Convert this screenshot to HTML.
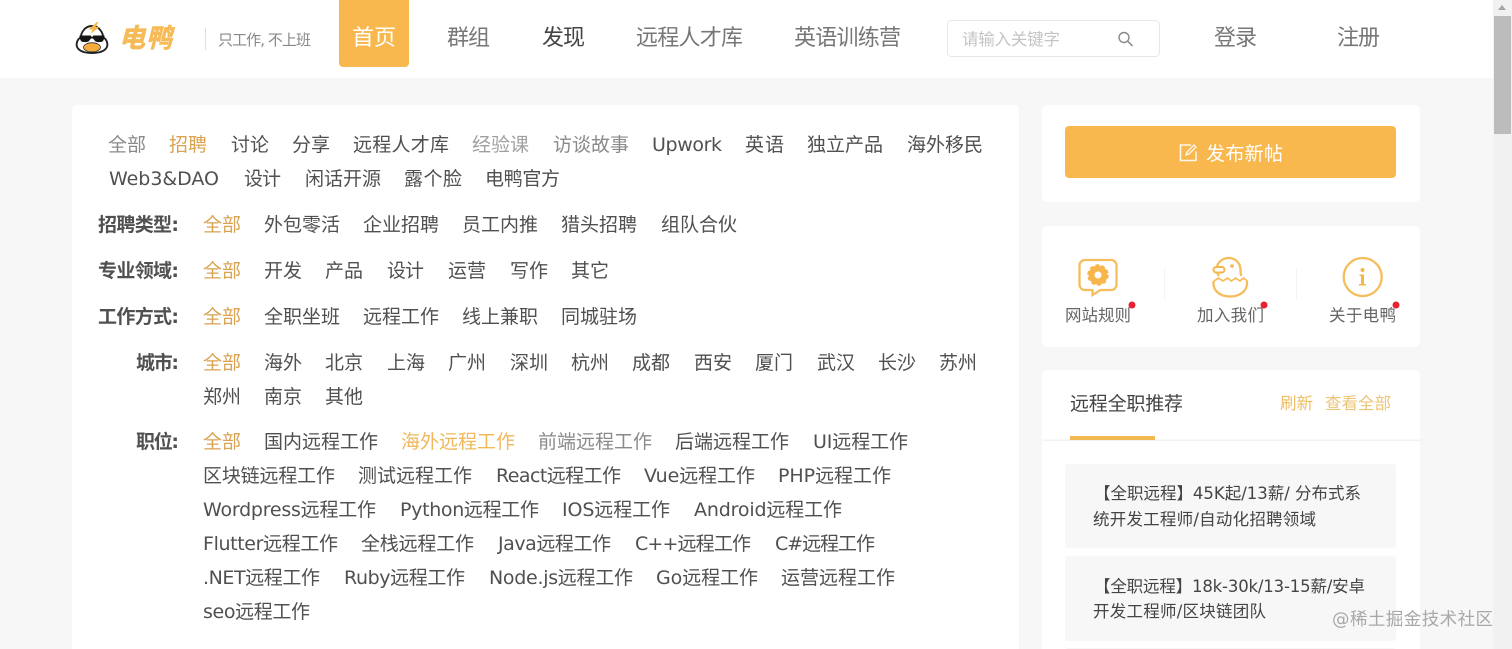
<!DOCTYPE html>
<html lang="zh"><head><meta charset="utf-8"><title>电鸭</title>
<style>
html,body{margin:0;padding:0;width:1512px;height:649px;overflow:hidden;background:#f7f7f7}
svg{position:absolute;left:0;top:0;display:block;filter:blur(.35px)}
text{font-family:"DejaVu Sans","Noto Sans CJK SC",sans-serif;font-size:19px;fill:#505050}
.n{font-size:22px;fill:#777}
.o{fill:#d9a351}.b{font-weight:700;fill:#505050}.g{fill:#8a8a8a}.l{fill:#a0a0a0}
.s{font-size:16.5px}
</style></head><body>
<svg width="1512" height="649" viewBox="0 0 1512 649" xmlns="http://www.w3.org/2000/svg">
<rect width="1512" height="78" fill="#fff"/>
<rect x="72" y="105" width="947" height="560" rx="5" fill="#fff"/>
<rect x="1042" y="105" width="378" height="97" rx="5" fill="#fff"/>
<rect x="1042" y="226" width="378" height="121" rx="5" fill="#fff"/>
<rect x="1042" y="370" width="378" height="290" rx="5" fill="#fff"/>
<rect x="1493" y="0" width="19" height="649" fill="#f1f1f1"/>
<path d="M1498 10l4-5 4 5z" fill="#a3a3a3"/>
<rect x="1494" y="16" width="17" height="118" fill="#bcbcbc"/>

<!-- logo -->
<path d="M92 26C85 26 81.500 32 80.500 37.500C76.500 40 75.500 45.500 78 48.500C81 52 86 53 92 53C98 53 103 52 106 48.500C108.500 45.500 107.500 40 103.500 37.500C102.500 32 99 26 92 26z" fill="#fff" stroke="#222" stroke-width="1.900"/>
<path d="M97 22L88.500 29.500H92.500L90.500 34L99.500 27H95.500L98.500 22z" fill="#f6b64a"/>
<path d="M79.500 35.500h11l1.500 1.500 1.500-1.500h11v2.500l-1.500 3c-1 1.500-7 1.500-8 0l-2-2.500h-2l-2 2.500c-1 1.500-7 1.500-8 0l-1.500-3z" fill="#151515"/>
<ellipse cx="92" cy="47.300" rx="8.500" ry="4.600" fill="#f6ab3e" stroke="#333" stroke-width=".8"/>
<text x="119" y="47" textLength="53" style="font-size:26px;font-weight:700;font-style:italic;fill:#f6bb58;stroke:#f6bb58;stroke-width:.7px">电鸭</text>
<rect x="205" y="28" width="1" height="22" fill="#ddd"/>
<text x="218" y="45" textLength="93" style="font-size:15px;fill:#888">只工作, 不上班</text>

<!-- nav -->
<path d="M339 0h70v63a4 4 0 0 1-4 4h-62a4 4 0 0 1-4-4z" fill="#f8b84e"/>
<text class="n" x="352" y="45" textLength="44" style="fill:#fff">首页</text>
<text class="n" x="447" y="45" textLength="43">群组</text>
<text class="n" x="542" y="45" textLength="43" style="fill:#444">发现</text>
<text class="n" x="636" y="45" textLength="107">远程人才库</text>
<text class="n" x="794" y="45" textLength="107">英语训练营</text>
<text class="n" x="1214" y="45" textLength="43">登录</text>
<text class="n" x="1337" y="45" textLength="43">注册</text>
<rect x="947.500" y="20.500" width="212" height="36" rx="4" fill="#fff" stroke="#e6e6e6"/>
<text x="962" y="45" textLength="98" style="font-size:16.5px;fill:#c4c4c4">请输入关键字</text>
<circle cx="1124" cy="37.500" r="5" fill="none" stroke="#888" stroke-width="1.400"/><path d="M1128 41.500l4.500 4.500" stroke="#888" stroke-width="1.500"/>

<!-- row 1 -->
<g>
<text class="g" x="108" y="151" textLength="38">全部</text>
<text class="o" x="169" y="151" textLength="38">招聘</text>
<text x="231" y="151" textLength="38">讨论</text>
<text x="292" y="151" textLength="38">分享</text>
<text x="353" y="151" textLength="96">远程人才库</text>
<text class="l" x="472" y="151" textLength="57">经验课</text>
<text class="g" x="553" y="151" textLength="76">访谈故事</text>
<text x="652" y="151" textLength="70">Upwork</text>
<text x="745" y="151" textLength="39">英语</text>
<text x="807" y="151" textLength="76">独立产品</text>
<text x="907" y="151" textLength="76">海外移民</text>
<text x="109" y="185" textLength="110">Web3&amp;DAO</text>
<text x="244" y="185" textLength="37">设计</text>
<text x="305" y="185" textLength="76">闲话开源</text>
<text x="404" y="185" textLength="58">露个脸</text>
<text x="485" y="185" textLength="75">电鸭官方</text>

<text class="b" x="98" y="231" textLength="81">招聘类型:</text>
<text class="o" x="203" y="231" textLength="38">全部</text>
<text x="264" y="231" textLength="76">外包零活</text>
<text x="363" y="231" textLength="76">企业招聘</text>
<text x="462" y="231" textLength="76">员工内推</text>
<text x="561" y="231" textLength="76">猎头招聘</text>
<text x="661" y="231" textLength="76">组队合伙</text>

<text class="b" x="98" y="277" textLength="81">专业领域:</text>
<text class="o" x="203" y="277" textLength="38">全部</text>
<text x="264" y="277" textLength="38">开发</text>
<text x="325" y="277" textLength="38">产品</text>
<text x="387" y="277" textLength="37">设计</text>
<text x="448" y="277" textLength="38">运营</text>
<text x="510" y="277" textLength="38">写作</text>
<text x="571" y="277" textLength="38">其它</text>

<text class="b" x="98" y="323" textLength="81">工作方式:</text>
<text class="o" x="203" y="323" textLength="38">全部</text>
<text x="264" y="323" textLength="76">全职坐班</text>
<text x="363" y="323" textLength="76">远程工作</text>
<text x="462" y="323" textLength="76">线上兼职</text>
<text x="561" y="323" textLength="76">同城驻场</text>

<text class="b" x="136" y="369" textLength="43">城市:</text>
<text class="o" x="203" y="369" textLength="38">全部</text>
<text x="264" y="369" textLength="38">海外</text>
<text x="325" y="369" textLength="38">北京</text>
<text x="387" y="369" textLength="38">上海</text>
<text x="448" y="369" textLength="38">广州</text>
<text x="510" y="369" textLength="38">深圳</text>
<text x="571" y="369" textLength="38">杭州</text>
<text x="632" y="369" textLength="38">成都</text>
<text x="694" y="369" textLength="38">西安</text>
<text x="755" y="369" textLength="38">厦门</text>
<text x="817" y="369" textLength="38">武汉</text>
<text x="878" y="369" textLength="38">长沙</text>
<text x="939" y="369" textLength="38">苏州</text>
<text x="203" y="403" textLength="38">郑州</text>
<text x="264" y="403" textLength="38">南京</text>
<text x="325" y="403" textLength="38">其他</text>

<text class="b" x="136" y="448" textLength="43">职位:</text>
<text class="o" x="203" y="448" textLength="38">全部</text>
<text x="264" y="448" textLength="114">国内远程工作</text>
<text x="401" y="448" textLength="114" style="fill:#f0b85a">海外远程工作</text>
<text class="g" x="538" y="448" textLength="114">前端远程工作</text>
<text x="675" y="448" textLength="114">后端远程工作</text>
<text x="813" y="448" textLength="95">UI远程工作</text>

<text x="203" y="482" textLength="132">区块链远程工作</text>
<text x="358" y="482" textLength="114">测试远程工作</text>
<text x="496" y="482" textLength="125">React远程工作</text>
<text x="644" y="482" textLength="111">Vue远程工作</text>
<text x="778" y="482" textLength="113">PHP远程工作</text>

<text x="203" y="516" textLength="173">Wordpress远程工作</text>
<text x="400" y="516" textLength="139">Python远程工作</text>
<text x="562" y="516" textLength="108">IOS远程工作</text>
<text x="694" y="516" textLength="148">Android远程工作</text>

<text x="203" y="550" textLength="135">Flutter远程工作</text>
<text x="361" y="550" textLength="113">全栈远程工作</text>
<text x="498" y="550" textLength="113">Java远程工作</text>
<text x="635" y="550" textLength="116">C++远程工作</text>
<text x="775" y="550" textLength="100">C#远程工作</text>

<text x="203" y="584" textLength="117">.NET远程工作</text>
<text x="344" y="584" textLength="121">Ruby远程工作</text>
<text x="489" y="584" textLength="144">Node.js远程工作</text>
<text x="656" y="584" textLength="102">Go远程工作</text>
<text x="781" y="584" textLength="114">运营远程工作</text>

<text x="203" y="618" textLength="107">seo远程工作</text>
</g>

<!-- post button -->
<rect x="1065" y="126" width="331" height="52" rx="4" fill="#f8b84e"/>
<path d="M1191 145h-10.500v15.500h15.500v-9" fill="none" stroke="#fff" stroke-width="1.500" opacity=".9"/>
<path d="M1186 155l1-3 7-7 2 2-7 7z" fill="none" stroke="#fff" stroke-width="1.300" opacity=".9"/>
<text x="1206" y="160" textLength="77" style="fill:#fff">发布新帖</text>

<!-- icon row -->
<rect x="1164" y="268" width="1" height="32" fill="#f3f3f3"/>
<rect x="1296" y="268" width="1" height="32" fill="#f3f3f3"/>
<path d="M1085 260h26a5.500 5.500 0 0 1 5.500 5.500v19a5.500 5.500 0 0 1-5.500 5.500h-10.500l-8 5v-5h-7.500a5.500 5.500 0 0 1-5.500-5.500v-19a5.500 5.500 0 0 1 5.500-5.500z" fill="none" stroke="#f6bd5c" stroke-width="2.300"/>
<circle cx="1098" cy="275" r="6.500" fill="none" stroke="#f6b64a" stroke-width="6"/>
<circle cx="1098" cy="275" r="9.500" fill="none" stroke="#f6b64a" stroke-width="2.500" stroke-dasharray="3.500 2.500"/>
<path d="M1219 276c-2-2-2-5-2-8 0-6 6-10 12-10 7 0 12 6 11.500 13l.5 5" fill="none" stroke="#f6bd5c" stroke-width="2.300"/>
<rect x="1213.500" y="267" width="11" height="5.500" rx="2.700" fill="#fff" stroke="#f6b64a" stroke-width="2"/>
<circle cx="1232" cy="266" r="1.800" fill="#f6b64a"/>
<path d="M1214 281l4.500-3 4.500 3 4.500-3 4 3 4-3 4.500 3 3.500-3 4 3" fill="none" stroke="#f6bd5c" stroke-width="1.700"/>
<path d="M1213.500 281c-1 9 5.500 15.500 16.500 15.500s18-6.500 17-15.500" fill="none" stroke="#f6bd5c" stroke-width="2.300"/>
<circle cx="1362.700" cy="277" r="19" fill="none" stroke="#f6bd5c" stroke-width="2.300"/>
<circle cx="1362.500" cy="270" r="2" fill="#f6b64a"/>
<path d="M1359.500 274.500h4.500v9.500h2v1.500h-7v-1.500h2v-8h-1.500z" fill="#f6b64a"/>
<text class="s" x="1065" y="321" textLength="66" style="fill:#666">网站规则</text>
<text class="s" x="1197" y="321" textLength="67" style="fill:#666">加入我们</text>
<text class="s" x="1329" y="321" textLength="67" style="fill:#666">关于电鸭</text>
<circle cx="1132" cy="305" r="3.500" fill="#e8202f"/>
<circle cx="1264" cy="305" r="3.500" fill="#e8202f"/>
<circle cx="1396" cy="305" r="3.500" fill="#e8202f"/>

<!-- recommend -->
<text x="1070" y="410" textLength="113" style="fill:#444">远程全职推荐</text>
<text class="s" x="1280" y="409" textLength="33" style="fill:#efbd62">刷新</text>
<text class="s" x="1325" y="409" textLength="66" style="fill:#ecc576">查看全部</text>
<rect x="1043" y="439.500" width="380" height="1.500" fill="#f2f2f2"/>
<rect x="1070" y="436" width="85" height="4" fill="#f2b950"/>
<rect x="1065" y="464" width="331" height="84" rx="3" fill="#f7f7f7"/>
<rect x="1065" y="556" width="331" height="85" rx="3" fill="#f7f7f7"/>
<rect x="1065" y="648" width="331" height="12" rx="3" fill="#f7f7f7"/>
<text class="s" x="1094" y="499" textLength="267" style="fill:#444">【全职远程】45K起/13薪/ 分布式系</text>
<text class="s" x="1093" y="525" textLength="223" style="fill:#444">统开发工程师/自动化招聘领域</text>
<text class="s" x="1094" y="592" textLength="271" style="fill:#444">【全职远程】18k-30k/13-15薪/安卓</text>
<text class="s" x="1093" y="617" textLength="173" style="fill:#444">开发工程师/区块链团队</text>
<text x="1332" y="625" textLength="161" style="font-size:17.5px;fill:#a8a8a8">@稀土掘金技术社区</text>
</svg>
</body></html>
